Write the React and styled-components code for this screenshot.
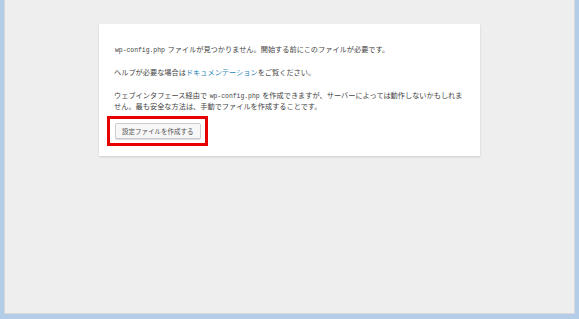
import React from 'react';
import styled, { createGlobalStyle } from 'styled-components';

const GlobalStyle = createGlobalStyle`
  html, body {
    margin: 0;
    padding: 0;
    background: #eeeeee;
  }
`;

const Frame = styled.div`
  box-sizing: border-box;
  height: 319px;
  background: #eeeeee;
  border-left: 4px solid #b3cde8;
  border-right: 4px solid #b3cde8;
  border-bottom: 5px solid #b3cde8;
  box-shadow: inset 1px 0 0 #d9d9d9, inset -1px 0 0 #d9d9d9, inset 0 -1px 0 #d9d9d9;
  padding-top: 24px;
  font-family: "Noto Sans CJK JP", "Noto Sans", sans-serif;
`;

const Card = styled.div`
  box-sizing: border-box;
  width: 381px;
  margin: 0 auto;
  background: #fff;
  padding: 8px 15px 10px;
  box-shadow: 0 1px 2px rgba(0, 0, 0, 0.14);
  color: #444;
`;

const Para = styled.p`
  margin: 12px 0;
  font-size: 7.2px;
  line-height: 11px;
`;

const Code = styled.code`
  font-family: "Liberation Mono", monospace;
  font-size: 6.4px;
  line-height: 1;
  color: #444;
  margin: 0 1px;
`;

const DocLink = styled.a`
  color: #2a86b8;
  text-decoration: none;
`;

const Marker = styled.div`
  width: fit-content;
  margin: -8px 0 0 -7px;
  padding: 4px 4px 4px 5px;
  border: 3px solid #e60000;
`;

const Button = styled.button`
  display: block;
  height: 16px;
  padding: 0 6px;
  margin: 0;
  background: #f7f7f7;
  border: 1px solid #cccccc;
  border-radius: 2px;
  color: #555;
  font-family: "Noto Sans CJK JP", sans-serif;
  font-size: 6.5px;
  line-height: 14px;
  box-shadow: 0 1px 0 #ddd;
`;

export default function App() {
  return (
    <>
      <GlobalStyle />
      <Frame>
        <Card>
          <Para>
            <Code>wp-config.php</Code> ファイルが見つかりません。開始する前にこのファイルが必要です。
          </Para>
          <Para>
            ヘルプが必要な場合は<DocLink href="#">ドキュメンテーション</DocLink>をご覧ください。
          </Para>
          <Para>
            ウェブインタフェース経由で <Code>wp-config.php</Code> を作成できますが、サーバーによっては動作しないかもしれません。最も安全な方法は、手動でファイルを作成することです。
          </Para>
          <Marker>
            <Button>設定ファイルを作成する</Button>
          </Marker>
        </Card>
      </Frame>
    </>
  );
}
